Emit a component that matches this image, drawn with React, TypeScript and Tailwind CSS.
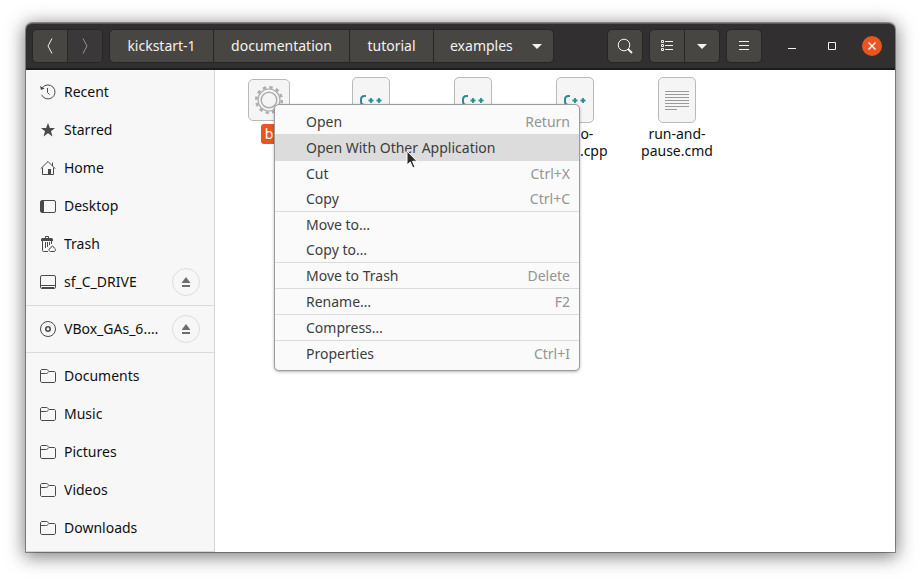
import type { ReactNode } from "react";

const stroke = { fill: "none", stroke: "currentColor", strokeWidth: 1 } as const;

function Icon({ children }: { children: ReactNode }) {
  return (
    <svg viewBox="0 0 16 16" className="size-4 shrink-0 text-[#4a4a4a]" aria-hidden="true">
      {children}
    </svg>
  );
}

const Recent = () => (
  <Icon>
    <path d="M2.2 4A7 7 0 1 1 1.6 10.8" {...stroke} />
    <path d="M7.500 4v4.500l2 2" {...stroke} />
    <path d="M0 2l1 4 3.600-1.500z" fill="currentColor" />
  </Icon>
);
const Star = () => (
  <Icon>
    <path d="M8 1l1.900 5H15l-4 3.200L12.500 14.500 8 11.300 3.500 14.500 5 9.200 1 6h5.100z" fill="currentColor" />
  </Icon>
);
const Home = () => (
  <Icon>
    <path d="M.8 8.700L8 1.500l7.200 7.200M2.500 7.500v7h11v-7M12.500 6V2.500" {...stroke} />
    <path d="M8 9h3v6H8z" fill="currentColor" />
  </Icon>
);
const Desktop = () => (
  <Icon>
    <rect x=".5" y="2.500" width="15" height="12" rx="1.500" {...stroke} />
    <path d="M1 3h3v11H1z" fill="currentColor" />
  </Icon>
);
const Trash = () => (
  <Icon>
    <path d="M1 5V3.500C1 2.500 2 2 3 2h2V1c0-.6.4-1 1-1h2c.6 0 1 .4 1 1v1h2c1 0 2 .5 2 1.500V5z" fill="currentColor" />
    <path d="M6 1h2v1H6z" fill="#f7f7f7" />
    <path d="M2.500 5v9.500c0 .6.4 1 1 1H8M5.500 6v6M7.500 6v5M9.500 6v3M11.500 5v3" {...stroke} />
    <path d="M9 13.500c0-1 1-1.500 2-1.500 0-1 .5-2 1.500-2 .8 0 1 .8 1 1.500 1.500.5 2 1.500 2 2.500s-.8 1.500-1.500 1.500H10.500C9.500 15.500 9 14.500 9 13.500z" {...stroke} />
  </Icon>
);
const Drive = () => (
  <Icon>
    <rect x=".5" y="1.500" width="15" height="13" rx="1.500" {...stroke} />
    <path d="M1 11.500h14M2 13.500h12" {...stroke} />
  </Icon>
);
const Disc = () => (
  <Icon>
    <circle cx="8" cy="8" r="7.500" {...stroke} />
    <circle cx="8" cy="8" r="2.200" fill="none" stroke="currentColor" strokeWidth="1.600" />
  </Icon>
);
const Folder = () => (
  <Icon>
    <path d="M.5 13V3c0-.8.600-1.500 1.500-1.500h4.500c1 0 1.500.7 2 1.500l.5.500h5c1 0 1.500.6 1.500 1.500v8c0 .9-.6 1.500-1.500 1.500H2C1 14.500.5 13.900.5 13zM.5 5.500h5.200c1.500 0 2-.5 3.300-2" {...stroke} />
  </Icon>
);

type Place = { name: string; icon: () => ReactNode; eject?: boolean };

const groups: Place[][] = [
  [
    { name: "Recent", icon: Recent },
    { name: "Starred", icon: Star },
    { name: "Home", icon: Home },
    { name: "Desktop", icon: Desktop },
    { name: "Trash", icon: Trash },
    { name: "sf_C_DRIVE", icon: Drive, eject: true },
  ],
  [{ name: "VBox_GAs_6.…", icon: Disc, eject: true }],
  [
    { name: "Documents", icon: Folder },
    { name: "Music", icon: Folder },
    { name: "Pictures", icon: Folder },
    { name: "Videos", icon: Folder },
    { name: "Downloads", icon: Folder },
  ],
];

function Sidebar() {
  return (
    <nav className="w-[189px] shrink-0 border-r border-b border-[#d5d5d5] bg-[#f7f7f7]">
      {groups.map((group, i) => (
        <ul
          key={i}
          className={i === 0 ? "pt-[3px] pb-1" : "border-t border-[#dcdcdc] py-1"}
        >
          {group.map(({ name, icon: Glyph, eject }) => (
            <li key={name} className="flex h-[38px] items-center px-3.5">
              <button type="button" className="flex min-w-0 flex-1 items-center gap-2 text-left">
                <Glyph />
                <span className="min-w-0 flex-1 truncate">{name}</span>
              </button>
              {eject && (
                <button
                  type="button"
                  aria-label={`Eject ${name}`}
                  className="ml-1 flex size-7 shrink-0 items-center justify-center rounded-full border border-[#dedede] text-[#6e6e6e]"
                >
                  <svg viewBox="0 0 10 10" className="size-2.5" aria-hidden="true">
                    <path d="M5 0l4.500 6h-9zM1 8h8v2H1z" fill="currentColor" />
                  </svg>
                </button>
              )}
            </li>
          ))}
        </ul>
      ))}
    </nav>
  );
}

function HeaderIcon({ children }: { children: ReactNode }) {
  return (
    <svg viewBox="0 0 16 16" className="size-4" aria-hidden="true">
      {children}
    </svg>
  );
}

const group = "flex h-[34px] overflow-hidden rounded-[5px] border border-[#272526] bg-[#484643] text-[#f2f2f2]";
const cell = "flex items-center justify-center";
const divider = "border-l border-[#272526]";

const Arrow = () => <path d="M3 6h10L8 11z" fill="currentColor" />;

function Header() {
  return (
    <header className="flex h-[47px] shrink-0 items-center rounded-t-[6px] border-t border-b-2 border-t-[#5c5a5b] border-b-[#1d1b1c] bg-[#322f30] px-1.5 text-[#f2f2f2]">
      <div className={group}>
        <button type="button" aria-label="Back" className={`${cell} w-[34px]`}>
          <HeaderIcon>
            <path d="M10 .5L6 8l4 7.500" {...stroke} />
          </HeaderIcon>
        </button>
        <button type="button" aria-label="Forward" className={`${cell} ${divider} w-[35px] bg-[#3a3838] text-[#959392]`}>
          <HeaderIcon>
            <path d="M6 .5L10 8l-4 7.500" {...stroke} />
          </HeaderIcon>
        </button>
      </div>
      <nav aria-label="Path" className={`${group} ml-1.5`}>
        <button type="button" className={`${cell} min-w-[103px] px-4`}>kickstart-1</button>
        <button type="button" className={`${cell} ${divider} min-w-[136px] px-4`}>documentation</button>
        <button type="button" className={`${cell} ${divider} min-w-[84px] px-4`}>tutorial</button>
        <button type="button" className={`${cell} ${divider} min-w-[119px] gap-4 pr-2 pl-4`}>
          examples
          <HeaderIcon><Arrow /></HeaderIcon>
        </button>
      </nav>
      <div className="ml-auto flex gap-1.5">
        <div className={group}>
          <button type="button" aria-label="Search" className={`${cell} w-[34px]`}>
            <HeaderIcon>
              <circle cx="7" cy="7" r="5.800" {...stroke} />
              <path d="M11 11l4 4" {...stroke} strokeWidth="1.800" />
            </HeaderIcon>
          </button>
        </div>
        <div className={group}>
          <button type="button" aria-label="List view" className={`${cell} w-[34px]`}>
            <HeaderIcon>
              <path d="M2.500 2.500h2v2h-2zM2.500 6.500h2v2h-2zM2.500 10.500h2v2h-2zM6 3.500h8M6 7.500h8M6 11.500h8" {...stroke} />
            </HeaderIcon>
          </button>
          <button type="button" aria-label="View options" className={`${cell} ${divider} w-[35px]`}>
            <HeaderIcon><Arrow /></HeaderIcon>
          </button>
        </div>
        <div className={group}>
          <button type="button" aria-label="Menu" className={`${cell} w-[34px]`}>
            <HeaderIcon>
              <path d="M3 3.500h10M3 7.500h10M3 11.500h10" {...stroke} />
            </HeaderIcon>
          </button>
        </div>
      </div>
      <div className="ml-5 flex gap-5 pr-[7px]">
        <button type="button" aria-label="Minimize" className={`${cell} size-5`}>
          <HeaderIcon><path d="M4 10.500h8" {...stroke} /></HeaderIcon>
        </button>
        <button type="button" aria-label="Maximize" className={`${cell} size-5`}>
          <HeaderIcon><path d="M4.500 4.500h7v7h-7z" {...stroke} /></HeaderIcon>
        </button>
        <button type="button" aria-label="Close" className={`${cell} size-5 rounded-full bg-[#e95420]`}>
          <HeaderIcon><path d="M4.500 4.500l7 7M11.500 4.500l-7 7" {...stroke} strokeWidth="1.500" /></HeaderIcon>
        </button>
      </div>
    </header>
  );
}

function Sheet({ children }: { children: ReactNode }) {
  return (
    <svg viewBox="0 0 48 48" className="size-12" aria-hidden="true">
      <rect x="5.500" y="1.500" width="37" height="45" rx="4.500" fill="#f5f5f5" stroke="#b9b9b9" />
      {children}
    </svg>
  );
}

const CppSheet = () => (
  <Sheet>
    <path d="M19 20h-1.500C15 20 14 21 14 23.500v2c0 2.500 1 3.500 3.500 3.500H19" fill="none" stroke="#2e8a8f" strokeWidth="2" />
    <path d="M21.500 24.500h5M24 22v5M29.500 24.500h5M32 22v5" fill="none" stroke="#2e8a8f" strokeWidth="1.800" />
  </Sheet>
);

const TextSheet = () => (
  <Sheet>
    <path d="M12 15.500h24M12 18.500h24M12 21.500h24M12 24.500h24M12 27.500h24M12 30.500h24M12 33.500h12" stroke="#9a9a9a" />
  </Sheet>
);

const GearSheet = () => (
  <svg viewBox="0 0 48 48" className="size-12" aria-hidden="true">
    <rect x="3.500" y="3.500" width="41" height="41" rx="4.500" fill="#f5f5f5" stroke="#b9b9b9" />
    <circle cx="24" cy="24" r="12.800" fill="none" stroke="#adadad" strokeWidth="2.500" strokeDasharray="3.350 3.350" />
    <circle cx="24" cy="24" r="11" fill="#f5f5f5" stroke="#adadad" strokeWidth="1.200" />
    <circle cx="24" cy="24" r="7.800" fill="none" stroke="#adadad" strokeWidth="1.500" />
  </svg>
);

const files = [
  { icon: GearSheet, name: "b", selected: true },
  { icon: CppSheet, name: "" },
  { icon: CppSheet, name: "" },
  { icon: CppSheet, name: "hello-world.cpp" },
  { icon: TextSheet, name: "run-and-pause.cmd" },
];

function Files() {
  return (
    <main className="min-w-0 flex-1 bg-white pt-1.5 pl-[3px]">
      <ul className="flex flex-wrap">
        {files.map(({ icon: Glyph, name, selected }, i) => (
          <li key={i} className="flex w-[102px] flex-col items-center text-center leading-[17px]">
            <Glyph />
            <span className={selected ? "rounded-[3px] bg-[#e95420] px-1 pt-px pb-0.5 text-white" : "px-2 pt-px"}>
              {name}
            </span>
          </li>
        ))}
      </ul>
    </main>
  );
}

type Action = { name: string; keys?: string; active?: boolean };

const menu: Action[][] = [
  [{ name: "Open", keys: "Return" }],
  [{ name: "Open With Other Application", active: true }],
  [{ name: "Cut", keys: "Ctrl+X" }, { name: "Copy", keys: "Ctrl+C" }],
  [{ name: "Move to…" }, { name: "Copy to…" }],
  [{ name: "Move to Trash", keys: "Delete" }],
  [{ name: "Rename…", keys: "F2" }],
  [{ name: "Compress…" }],
  [{ name: "Properties", keys: "Ctrl+I" }],
];

function ContextMenu() {
  return (
    <div
      role="menu"
      className="absolute top-[81px] left-[248px] w-[306px] rounded-[5px] border border-[#9c9c9c] bg-[#fafafa] py-1 text-[#3d3d3d] shadow-[0_1px_3px_rgba(0,0,0,0.3)]"
    >
      {menu.map((section, i) => (
        <div key={i} className={i === 0 ? "" : "border-t border-[#dcdcdc]"}>
          {section.map(({ name, keys, active }) => (
            <button
              key={name}
              type="button"
              role="menuitem"
              className={`flex h-[25px] w-full items-center justify-between pr-[9px] pl-[31px] ${active ? "bg-[#dcdcdc]" : ""}`}
            >
              <span>{name}</span>
              <span className="text-[#949494]">{keys}</span>
            </button>
          ))}
        </div>
      ))}
      <svg viewBox="0 0 12 19" className="absolute top-[45px] left-[131px] h-[19px] w-3" aria-hidden="true">
        <path d="M1 1v14l3.300-3 2.500 6 2.200-1-2.500-5.700H11z" fill="#2b2b2b" stroke="#fff" />
      </svg>
    </div>
  );
}

export default function App() {
  return (
    <div className="flex min-h-screen bg-white px-[26px] pt-[23px] pb-[29px] font-['Noto_Sans','Open_Sans',sans-serif] text-[14px] leading-5 text-[#111111]">
      <div className="relative flex min-w-0 flex-1 flex-col rounded-t-[6px] shadow-[0_0_0_1px_rgba(0,0,0,0.35),0_3px_18px_2px_rgba(0,0,0,0.5)]">
        <Header />
        <div className="flex min-h-0 flex-1">
          <Sidebar />
          <Files />
        </div>
        <ContextMenu />
      </div>
    </div>
  );
}
